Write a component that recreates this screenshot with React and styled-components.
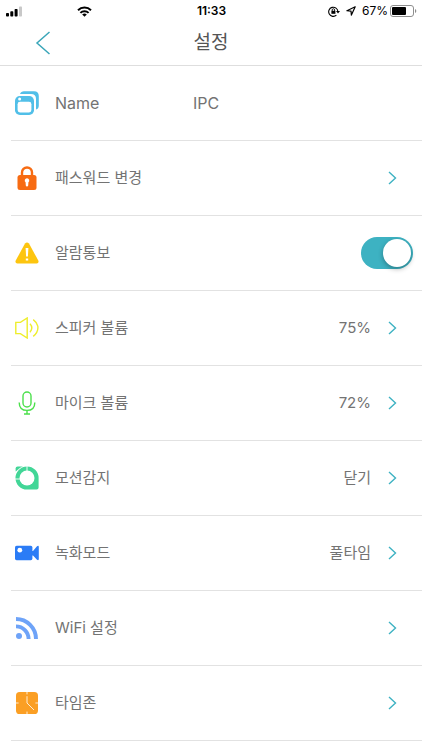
import { useState } from "react"
import styled, { createGlobalStyle } from "styled-components"


const App = () => {

    const [name, setName] = useState("IPC")
    const [alarm, setAlarm] = useState(true)

    return (
        <Page>
            <GlobalStyle/>
            <StatusBar>
                <StatusLeft>
                    <SignalIcon/>
                    <WifiIcon/>
                </StatusLeft>
                <Clock>11:33</Clock>
                <StatusRight>
                    <RotationLockIcon/>
                    <LocationIcon/>
                    <span>67%</span>
                    <BatteryIcon/>
                </StatusRight>
            </StatusBar>
            <Header>
                <BackButton type="button" aria-label="뒤로">
                    <svg width="16" height="24" viewBox="0 0 16 24" fill="none" stroke="#3aa6b9" strokeWidth="1.5">
                        <path d="M14.5 1 L2 12 L14.5 23"/>
                    </svg>
                </BackButton>
                <Title>설정</Title>
            </Header>
            <List>
                <Item>
                    <Row>
                        <IconBox><WindowsIcon/></IconBox>
                        <NameLabel htmlFor="name">Name</NameLabel>
                        <NameInput id="name" type="text" value={name} onChange={(e) => setName(e.target.value)}/>
                    </Row>
                </Item>
                <LinkItem icon={<LockIcon/>} label="패스워드 변경"/>
                <Item>
                    <Row>
                        <IconBox><WarningIcon/></IconBox>
                        <SwitchLabel htmlFor="alarm">알람통보</SwitchLabel>
                        <Switch id="alarm" type="checkbox" role="switch" checked={alarm} onChange={(e) => setAlarm(e.target.checked)}/>
                    </Row>
                </Item>
                <LinkItem icon={<SpeakerIcon/>} label="스피커 볼륨" value="75%"/>
                <LinkItem icon={<MicIcon/>} label="마이크 볼륨" value="72%"/>
                <LinkItem icon={<MotionIcon/>} label="모션감지" value="닫기"/>
                <LinkItem icon={<CameraIcon/>} label="녹화모드" value="풀타임"/>
                <LinkItem icon={<FeedIcon/>} label="WiFi 설정"/>
                <LinkItem icon={<ClockIcon/>} label="타임존"/>
            </List>
        </Page>
    )
}

const LinkItem = ({ icon, label, value }) => (
    <Item>
        <RowButton type="button">
            <IconBox>{icon}</IconBox>
            <RowLabel>{label}</RowLabel>
            {value && <RowValue>{value}</RowValue>}
            <Chevron width="9" height="14" viewBox="0 0 9 14">
                <path d="M1 1 L7.5 7 L1 13"/>
            </Chevron>
        </RowButton>
    </Item>
)

// status bar icons

const SignalIcon = () => (
    <svg width="17" height="11" viewBox="0 0 17 11">
        <rect x="0" y="7" width="3" height="3.5" rx="0.8"/>
        <rect x="4.3" y="5.3" width="3" height="5.2" rx="0.8"/>
        <rect x="8.6" y="3" width="3" height="7.5" rx="0.8"/>
        <rect x="13" y="0.5" width="3" height="10" rx="0.8" fill="#c8c8c8"/>
    </svg>
)

const WifiIcon = () => (
    <svg width="15" height="11" viewBox="0 0 15 11" fill="none" stroke="#000" strokeWidth="2">
        <path d="M1 4.2 A9.3 9.3 0 0 1 14 4.2"/>
        <path d="M3.4 6.9 A5.8 5.8 0 0 1 11.6 6.9"/>
        <path d="M7.5 10.8 L5.2 8.6 A3.3 3.3 0 0 1 9.8 8.6 Z" fill="#000" stroke="none"/>
    </svg>
)

const RotationLockIcon = () => (
    <svg width="12" height="11" viewBox="0 0 12 11" fill="none" stroke="#000">
        <path d="M8.4 9.2 A4.6 4.6 0 1 1 9.9 5.6" strokeWidth="1.1"/>
        <path d="M8 5 H12 L10 7.6 Z" fill="#000" stroke="none"/>
        <path d="M4.2 5 V3.9 A1.2 1.2 0 0 1 6.6 3.9 V5" strokeWidth="0.9"/>
        <rect x="3.4" y="4.8" width="4" height="3" fill="#000" stroke="none"/>
    </svg>
)

const LocationIcon = () => (
    <svg width="10" height="10" viewBox="0 0 10 10" fill="none" stroke="#000" strokeWidth="1.2" strokeLinejoin="round">
        <path d="M9.2 0.8 L0.9 4.7 L5 5.1 L5.4 9.1 Z"/>
    </svg>
)

const BatteryIcon = () => (
    <svg width="27" height="12" viewBox="0 0 27 12">
        <rect x="0.5" y="0.5" width="23" height="11" rx="2.5" fill="none" stroke="#8e8e8e"/>
        <rect x="2" y="2" width="14" height="8" rx="1" fill="#000"/>
        <path d="M25 4 V8 Q26.3 7.5 26.3 6 Q26.3 4.5 25 4 Z" fill="#8e8e8e"/>
    </svg>
)

// row icons

const WindowsIcon = () => (
    <svg width="24" height="24" viewBox="0 0 24 24" fill="none">
        <path d="M5 3 Q6 0.2 9 0.2 H19 Q23.8 0.2 23.8 5 V14.5 Q23.8 17.8 21 18.6 V8 Q21 3 16 3 Z" fill="#51bfe8"/>
        <rect x="0" y="5" width="19" height="19" rx="4.8" fill="#51bfe8"/>
        <rect x="2.6" y="10.8" width="13.8" height="10.6" rx="2.4" fill="#fff"/>
        <circle cx="4.6" cy="7.9" r="1.5" fill="#fff"/>
    </svg>
)

const LockIcon = () => (
    <svg width="20" height="24" viewBox="0 0 20 24">
        <path d="M5 11 V6.5 A5 5 0 0 1 15 6.5 V11" fill="none" stroke="#f76b12" strokeWidth="2.4"/>
        <rect x="0.5" y="9" width="19" height="15" rx="2.5" fill="#f76b12"/>
        <path d="M10 12.2 A2.3 2.3 0 0 1 11.4 16.3 L11.2 19.6 Q11.1 20.6 10 20.6 Q8.9 20.6 8.8 19.6 L8.6 16.3 A2.3 2.3 0 0 1 10 12.2 Z" fill="#fff"/>
    </svg>
)

const WarningIcon = () => (
    <svg width="24" height="22" viewBox="0 0 24 22">
        <path d="M10 1.6 Q12 -0.8 14 1.6 L23.3 18.6 Q24.2 21.4 21.6 21.6 H2.4 Q-0.2 21.4 0.7 18.6 Z" fill="#fdc50f"/>
        <path d="M10.6 6 H13.4 L12.9 14.6 H11.1 Z M10.8 16.4 H13.2 V18.6 H10.8 Z" fill="#fff"/>
    </svg>
)

const SpeakerIcon = () => (
    <svg width="24" height="22" viewBox="0 0 24 22" fill="none" stroke="#eeee2b" strokeWidth="1.4">
        <path d="M0.8 5.4 H5.4 L12.2 1 V21 L5.4 16.6 H0.8 Z"/>
        <path d="M15 6.8 Q18.6 11 15 15.2"/>
        <path d="M18.2 2.6 Q21.8 5.2 22.8 9.2 Q23.6 15 18.2 19.4"/>
    </svg>
)

const MicIcon = () => (
    <svg width="18" height="24" viewBox="0 0 18 24" fill="none" stroke="#4ce04c" strokeWidth="1.4">
        <rect x="5" y="1" width="8" height="15" rx="4"/>
        <path d="M1.2 11.4 Q1.2 19.4 9 19.4 Q16.8 19.4 16.8 11.4"/>
        <path d="M9 19.4 V22.8 M6 23 H12"/>
    </svg>
)

const MotionIcon = () => (
    <svg width="24" height="24" viewBox="0 0 24 24">
        <path d="M12 0.5 A11.5 11.5 0 0 1 23.6 12 V21.6 Q23.6 23.6 21.6 23.6 H12 A11.5 11.5 0 1 1 12 0.5 Z" fill="#42d697"/>
        <path d="M0.6 5.6 V2.6 Q0.6 0.6 2.6 0.6 H8 Z" fill="#42d697"/>
        <circle cx="12" cy="12" r="7.5" fill="#fff"/>
        <path d="M12 0 V5 M0 13 H5" stroke="#fff" strokeWidth="0.9"/>
        <path d="M0.6 7 Q3 2.4 8 0.4" fill="none" stroke="#fff" strokeWidth="0.6"/>
    </svg>
)

const CameraIcon = () => (
    <svg width="24" height="16" viewBox="0 0 24 16">
        <rect x="0" y="0.8" width="17.4" height="14.4" rx="1.6" fill="#2b7cf6"/>
        <path d="M16 6 H18 L22 1.2 Q23.8 0.2 23.8 2 V14 Q23.8 15.8 22 14.8 L18 10.4 H16 Z" fill="#2b7cf6"/>
        <circle cx="4.8" cy="5.2" r="2.4" fill="#fff"/>
    </svg>
)

const FeedIcon = () => (
    <svg width="22" height="22" viewBox="0 0 22 22" fill="none" stroke="#6ea3f8" strokeWidth="3.9">
        <circle cx="3" cy="19" r="3" fill="#6ea3f8" stroke="none"/>
        <path d="M0 9.4 A12.6 12.6 0 0 1 12.6 22"/>
        <path d="M0 2 A20 20 0 0 1 20 22"/>
    </svg>
)

const ClockIcon = () => (
    <svg width="22" height="22" viewBox="0 0 22 22" fill="none" stroke="#fff" strokeWidth="0.8">
        <rect width="22" height="22" rx="3.6" fill="#fb9f24" stroke="none"/>
        <path d="M11 4.2 V11 L18 18"/>
        <path d="M11 0 V2.4 M11 19.6 V22 M0 11 H2.6 M19.4 11 H22"/>
    </svg>
)

const GlobalStyle = createGlobalStyle`
* {
    box-sizing: border-box;
}

body {
    margin: 0;
    background: #fff;
    color: #737373;
    font-family: Inter, "Noto Sans CJK KR", sans-serif;
    font-size: 15px;
    line-height: 22px;
}

button, input {
    font: inherit;
    color: inherit;
}
`

const Page = styled.div`
min-height: 100vh;
background: #fff;
`

const StatusBar = styled.div`
display: grid;
grid-template-columns: 1fr auto 1fr;
align-items: center;
height: 22px;
padding: 0 5px 0 6px;
color: #000;
font-size: 12px;
line-height: 22px;
`

const StatusLeft = styled.div`
display: flex;
align-items: center;
gap: 54px;
`

const Clock = styled.span`
font-weight: 600;
`

const StatusRight = styled.div`
display: flex;
align-items: center;
justify-content: flex-end;
gap: 6px;

span + svg {
    margin-left: -4px;
}
`

const Header = styled.header`
display: grid;
grid-template-columns: 60px 1fr 60px;
align-items: center;
height: 44px;
padding-bottom: 2px;
border-bottom: 1px solid #dedede;
`

const BackButton = styled.button`
display: flex;
justify-content: flex-end;
padding: 0 9px 0 0;
border: 0;
background: none;
cursor: pointer;
`

const Title = styled.h1`
margin: 0;
color: #555;
font-size: 19px;
font-weight: 400;
line-height: 28px;
text-align: center;
`

const List = styled.ul`
margin: 0;
padding: 0 0 0 11px;
list-style: none;
`

const Item = styled.li`
border-bottom: 1px solid #e2e2e2;
`

const Row = styled.div`
display: flex;
align-items: center;
width: 100%;
height: 74px;
padding: 0 9px 0 4px;
`

const RowButton = styled(Row).attrs({ as: "button" })`
padding-right: 25px;
border: 0;
background: none;
text-align: left;
cursor: pointer;
`

const IconBox = styled.span`
display: flex;
justify-content: center;
flex: none;
width: 24px;
margin-right: 16px;
`

const RowLabel = styled.span`
flex: 1;
`

const NameLabel = styled.label`
flex: none;
width: 138px;
font-size: 16px;
`

const NameInput = styled.input`
flex: 1;
min-width: 0;
padding: 0;
border: 0;
outline: 0;
background: none;
font-size: 16px;
`

const SwitchLabel = styled.label`
flex: 1;
`

const RowValue = styled.span`
margin-right: 17px;
`

const Chevron = styled.svg`
flex: none;
fill: none;
stroke: #3db2c2;
stroke-width: 1.4;
`

const Switch = styled.input`
appearance: none;
flex: none;
width: 52px;
height: 32px;
margin: 0;
padding: 2px;
border-radius: 16px;
background: ${({ checked }) => (checked ? "#3db2c2" : "#d8d8d8")};
cursor: pointer;

&::before {
    content: "";
    display: block;
    width: 28px;
    height: 28px;
    margin-left: ${({ checked }) => (checked ? "20px" : "0")};
    border-radius: 50%;
    background: #fff;
    box-shadow: 0 2px 5px rgba(0, 0, 0, 0.3);
}
`


export default App
